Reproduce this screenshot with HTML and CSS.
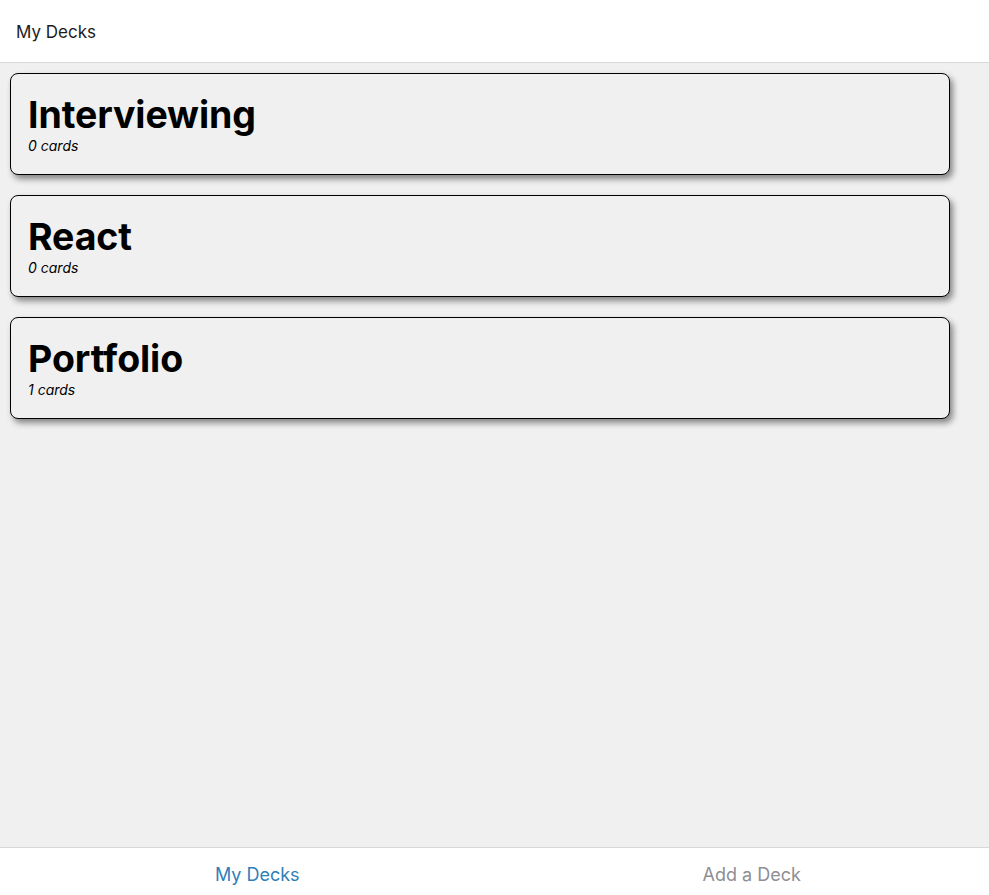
FILE: index.html
```html
<!DOCTYPE html>
<html>
<head>
<meta charset="utf-8">
<link rel="stylesheet" href="styles.css">
</head>
<body>
<div class="app">
  <header class="header"><span class="header-title">My Decks</span></header>
  <main class="list">
    <div class="deck"><div class="deck-title">Interviewing</div><div class="deck-count">0 cards</div></div>
    <div class="deck"><div class="deck-title">React</div><div class="deck-count">0 cards</div></div>
    <div class="deck"><div class="deck-title">Portfolio</div><div class="deck-count">1 cards</div></div>
  </main>
  <nav class="tabs">
    <div class="tab tab-active">My Decks</div>
    <div class="tab">Add a Deck</div>
  </nav>
</div>
</body>
</html>
```
FILE: styles.css
```css
html, body {
  margin: 0;
  padding: 0;
  height: 100%;
}
body {
  font-family: Inter, "Noto Sans", sans-serif;
  background: #f0f0f0;
  color: #000;
}
.app {
  display: flex;
  flex-direction: column;
  height: 100vh;
}
.header {
  background: #fff;
  border-bottom: 1px solid #d8d8d8;
  display: flex;
  align-items: center;
  padding: 2px 0 0 16px;
  box-sizing: border-box;
  height: 63px;
  flex-shrink: 0;
}
.header-title {
  font-size: 17px;
  color: #1c1c1e;
}
.list {
  flex: 1;
  display: flex;
  flex-direction: column;
  gap: 20px;
  padding: 10px 39px 0 10px;
}
.deck {
  border: 1px solid #000;
  border-radius: 8px;
  background: #f0f0f0;
  box-shadow: 3px 4px 6px rgba(0,0,0,0.45);
  padding: 18px 17px 0;
  box-sizing: border-box;
  height: 102px;
}
.deck-title {
  font-size: 37.5px;
  font-weight: 700;
  line-height: 46px;
  letter-spacing: -0.1px;
}
.deck-count {
  font-size: 14px;
  font-style: italic;
  line-height: 16px;
  margin-top: 0;
}
.tabs {
  height: 47px;
  background: #fff;
  border-top: 1px solid #d8d8d8;
  display: flex;
  flex-shrink: 0;
}
.tab {
  flex: 1;
  display: flex;
  align-items: center;
  justify-content: center;
  font-size: 18px;
  color: #8e8e93;
  padding: 6px 0 0 20px;
}
.tab-active {
  color: #2f80b8;
}
```
